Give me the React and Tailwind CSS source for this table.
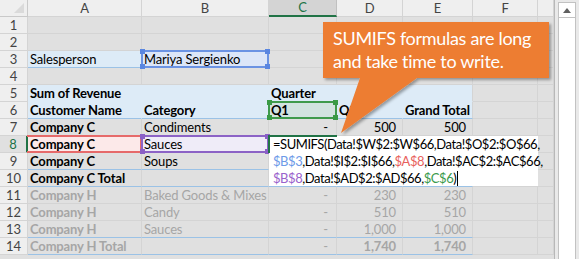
import React from "react";

const COL_LABELS = ["A", "B", "C", "D", "E", "F", ""];

// row data: [A, B, C, D, E, F, G]
const ROWS = {
  3: ["Salesperson", "Mariya Sergienko"],
  5: ["Sum of Revenue", "", "Quarter"],
  6: ["Customer Name", "Category", "Q1", "Q2", "Grand Total"],
  7: ["Company C", "Condiments", "-", "500", "500"],
  8: ["Company C", "Sauces"],
  9: ["Company C", "Soups"],
  10: ["Company C Total"],
  11: ["Company H", "Baked Goods & Mixes", "-", "230", "230"],
  12: ["Company H", "Candy", "-", "510", "510"],
  13: ["Company H", "Sauces", "-", "1,000", "1,000"],
  14: ["Company H Total", "", "-", "1,740", "1,740"],
};

// cells carrying a coloured reference / selection frame
const FRAMES = {
  "3-1": { border: "border-[#6b93e3]", handle: "bg-[#5a86e0]", handles: true },
  "6-2": { border: "border-[#3f9a4c]", handle: "bg-[#3a9a46]", handles: true },
  "8-0": { border: "border-[#e66a6a] border-l-0", handle: "", handles: false },
  "8-1": { border: "border-[#8c63c6]", handle: "bg-[#8a5fc6]", handles: true },
};

function fillClass(r, c) {
  if (r === 3 && c === 0) return "bg-[#ddebf7] border-r-[#ddebf7] border-b-[#9bc2e6]";
  if (r === 3 && c === 1) return "bg-[#dce6f8] border-[#dce6f8]";
  if (r === 5 && c < 4) return "bg-[#ddebf7] border-[#ddebf7]";
  if (r === 5 && c === 4) return "bg-[#ddebf7] border-b-[#ddebf7] border-r-[#d4d4d4]";
  if (r === 6 && c === 2) return "bg-[#d2e3e0] border-r-[#ddebf7] border-b-[#9bc2e6]";
  if (r === 6 && c < 4) return "bg-[#ddebf7] border-r-[#ddebf7] border-b-[#9bc2e6]";
  if (r === 6 && c === 4) return "bg-[#ddebf7] border-r-[#d4d4d4] border-b-[#9bc2e6]";
  if (r === 8 && c === 0) return "bg-[#fce9e9] border-[#fce9e9]";
  if (r === 8 && c === 1) return "bg-[#efecf8] border-[#efecf8]";
  if ((r === 9 || r === 10 || r === 13 || r === 14) && c <= 4)
    return "border-r-[#d4d4d4] border-b-[#9bc2e6]";
  return "border-[#d4d4d4]";
}

function textClass(r, c) {
  const grey = r >= 11;
  const bold =
    (c === 0 && r >= 5) || r === 6 || (r === 5 && c === 2) || (r === 14 && c >= 3);
  const num = r >= 7 && c >= 2;
  return [
    grey ? "text-[#a6a6a6]" : "text-black",
    bold ? "font-bold" : "font-normal",
    num ? "justify-end pr-[6px]" : "justify-start pl-[2px]",
  ].join(" ");
}

function Frame({ f }) {
  return (
    <div className={`absolute -inset-[1px] z-10 border-2 ${f.border}`}>
      {f.handles && (
        <>
          <span className={`absolute -left-[3px] -top-[3px] h-[5px] w-[5px] ${f.handle}`} />
          <span className={`absolute -right-[3px] -top-[3px] h-[5px] w-[5px] ${f.handle}`} />
          <span className={`absolute -left-[3px] -bottom-[3px] h-[5px] w-[5px] ${f.handle}`} />
          <span className={`absolute -right-[3px] -bottom-[3px] h-[5px] w-[5px] ${f.handle}`} />
        </>
      )}
    </div>
  );
}

// formula typed into C8, spilling over the cells to its right
function FormulaEditor() {
  return (
    <div className="absolute left-0 top-0 z-20 h-[50px] w-[269px] bg-white">
      <div className="absolute -left-[1px] -top-[1px] h-[2px] w-[69px] bg-[#217346]" />
      <div className="absolute -left-[1px] top-0 h-[17px] w-[2px] bg-[#217346]" />
      <div className="flex flex-col pl-[4px] text-[13px] leading-[17px] tracking-[-0.45px] text-black whitespace-nowrap">
        <div>=SUMIFS(Data!$W$2:$W$66,Data!$O$2:$O$66,</div>
        <div>
          <span className="text-[#6d9ae8]">$B$3</span>,Data!$I$2:$I$66,
          <span className="text-[#e8615c]">$A$8</span>,Data!$AC$2:$AC$66,
        </div>
        <div className="flex items-center">
          <span className="text-[#9a62cc]">$B$8</span>,Data!$AD$2:$AD$66,
          <span className="text-[#3a9a4c]">$C$6</span>)
          <span className="ml-[1px] inline-block h-[15px] w-[1px] bg-black" />
        </div>
      </div>
    </div>
  );
}

function Cell({ r, c }) {
  const t = (ROWS[r] || [])[c] || "";
  const frame = FRAMES[`${r}-${c}`];
  return (
    <div
      className={`relative flex items-center whitespace-nowrap border-r border-b ${fillClass(r, c)} ${textClass(r, c)}`}
    >
      <span className={t === "-" ? "pr-[2px]" : ""}>{t}</span>
      {frame && <Frame f={frame} />}
      {r === 8 && c === 2 && <FormulaEditor />}
    </div>
  );
}

function Sheet() {
  const rows = Array.from({ length: 14 }, (_, i) => i + 1);
  return (
    <div className="grid grid-cols-[28px_114px_127px_68px_66px_70px_65px_16px] grid-rows-[17px_repeat(14,17px)] text-[13px] leading-none tracking-[-0.15px]">
      <div className="flex items-end justify-end bg-[#efefef] border-r border-b border-[#c9c9c9] p-[3px]">
        <svg width="10" height="10" viewBox="0 0 10 10">
          <polygon points="10,0 10,10 0,10" fill="#dadada" />
        </svg>
      </div>
      {COL_LABELS.map((l) =>
        l === "C" ? (
          <div
            key={l}
            className="flex items-center justify-center bg-[#d4d4d4] text-[#217346] border-r border-[#c0c0c0] border-b-2 border-b-[#217346]"
          >
            {l}
          </div>
        ) : (
          <div
            key={l || "g"}
            className="flex items-center justify-center bg-[#efefef] text-[#444] border-r border-b border-[#d4d4d4]"
          >
            {l}
          </div>
        )
      )}
      {rows.map((r) => (
        <React.Fragment key={r}>
          {r === 8 ? (
            <div className="flex items-center justify-center bg-[#e0e0e0] text-[#217346] border-b border-[#d4d4d4] border-r-2 border-r-[#217346]">
              {r}
            </div>
          ) : (
            <div className="flex items-center justify-center bg-[#efefef] text-[#444] border-r border-b border-[#d4d4d4]">
              {r}
            </div>
          )}
          {COL_LABELS.map((_, c) => (
            <Cell key={c} r={r} c={c} />
          ))}
        </React.Fragment>
      ))}
    </div>
  );
}

function Scrollbar() {
  return (
    <div className="flex h-full w-[25px] bg-[#e9e9e9] border-l border-[#b8b8b8]">
      <div className="ml-[3px] mt-[2px] flex h-full w-[18px] flex-col border border-[#c2c2c2] bg-white">
        <div className="flex h-[15px] items-center justify-center border-b border-[#c2c2c2]">
          <svg width="8" height="5" viewBox="0 0 8 5">
            <polygon points="0,5 8,5 4,0" fill="#606060" />
          </svg>
        </div>
      </div>
    </div>
  );
}

function Callout() {
  return (
    <>
      <svg className="pointer-events-none absolute inset-0 z-30" width="579" height="259" viewBox="0 0 579 259">
        <defs>
          <filter id="sh" x="-10%" y="-10%" width="130%" height="130%">
            <feDropShadow dx="2" dy="2" stdDeviation="1.5" floodColor="#000" floodOpacity="0.35" />
          </filter>
        </defs>
        <path d="M323 22 H549 V78 H417 L341 133 L360 78 H323 Z" fill="#ed7d31" filter="url(#sh)" />
      </svg>
      <div className="absolute left-[333px] top-[27px] z-30 text-[18px] leading-[23px] tracking-[-0.3px] text-white">
        <div>SUMIFS formulas are long</div>
        <div>and take time to write.</div>
      </div>
    </>
  );
}

export default function App() {
  return (
    <div className="relative flex h-[259px] w-[579px] overflow-hidden bg-[#e0e0e0] font-['Lato',sans-serif]">
      <div className="flex flex-col">
        <Sheet />
      </div>
      <Scrollbar />
      <Callout />
    </div>
  );
}
